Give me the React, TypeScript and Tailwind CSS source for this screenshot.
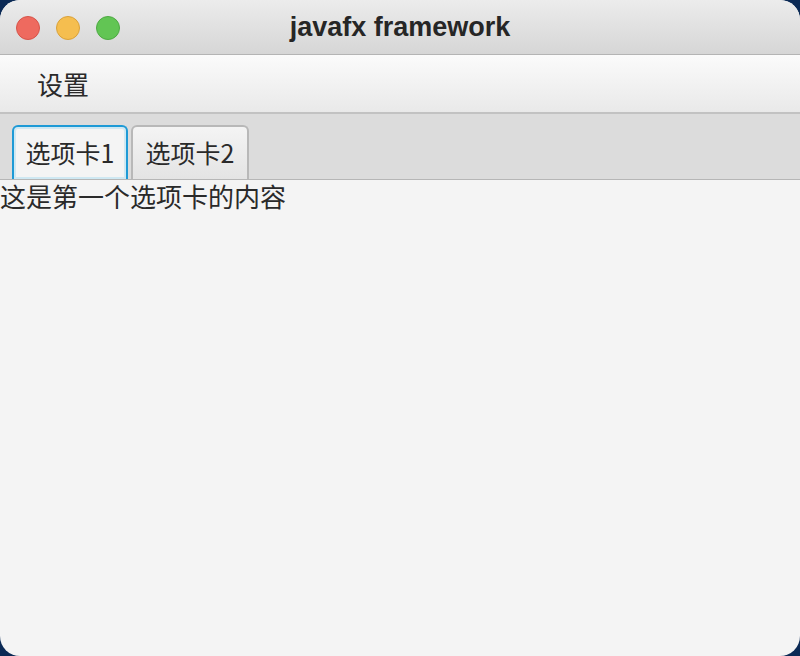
import React from "react"

const cjk = { fontFamily: '"Noto Sans CJK SC", "Noto Sans", sans-serif' }

const Light = ({ color, ring }: { color: string; ring: string }) => (
  <div className={`h-[24px] w-[24px] rounded-full border ${color} ${ring}`} />
)

export default function App() {
  return (
    <div className="h-[656px] w-[800px] bg-[#0b2a55]">
      <div className="flex h-full w-full flex-col overflow-hidden rounded-[20px] bg-[#f4f4f4]">
        {/* title bar */}
        <div className="relative flex h-[55px] shrink-0 items-center justify-center border-b border-[#b4b4b4] bg-gradient-to-b from-[#ececec] to-[#d6d6d6]">
          <div className="absolute left-[16px] top-[16px] flex gap-[16px]">
            <Light color="bg-[#ee6a5f]" ring="border-[#d6544a]" />
            <Light color="bg-[#f5be4f]" ring="border-[#d9a13a]" />
            <Light color="bg-[#62c554]" ring="border-[#4ea943]" />
          </div>
          <span
            className="text-[27px] font-bold text-[#262626]"
            style={{ fontFamily: '"Liberation Sans", Arial, sans-serif' }}
          >
            javafx framework
          </span>
        </div>

        {/* menu bar */}
        <div className="flex h-[59px] shrink-0 items-center border-b-2 border-[#c2c2c2] bg-gradient-to-b from-[#fbfbfb] to-[#e9e9e9] pl-[37px]">
          <span className="text-[26px] text-[#2a2a2a]" style={cjk}>
            设置
          </span>
        </div>

        {/* tab header */}
        <div className="flex h-[66px] shrink-0 items-end gap-[3px] border-b border-[#b6b6b6] bg-[#dcdcdc] pl-[12px]">
          <div className="flex h-[54px] w-[116px] items-center justify-center rounded-t-[6px] border-2 border-b-0 border-[#1e9ad6] bg-[#f4f4f4] shadow-[inset_0_0_0_2px_#cfe8f2]">
            <span className="text-[25px] text-[#2a2a2a]" style={cjk}>
              选项卡1
            </span>
          </div>
          <div className="flex h-[54px] w-[118px] items-center justify-center rounded-t-[6px] border-2 border-b-0 border-[#b8b8b8] bg-gradient-to-b from-[#f4f4f4] to-[#e4e4e4]">
            <span className="text-[25px] text-[#2a2a2a]" style={cjk}>
              选项卡2
            </span>
          </div>
        </div>

        {/* content */}
        <div className="flex-1">
          <p className="text-[26px] leading-[32px] text-[#2a2a2a]" style={cjk}>
            这是第一个选项卡的内容
          </p>
        </div>
      </div>
    </div>
  )
}
